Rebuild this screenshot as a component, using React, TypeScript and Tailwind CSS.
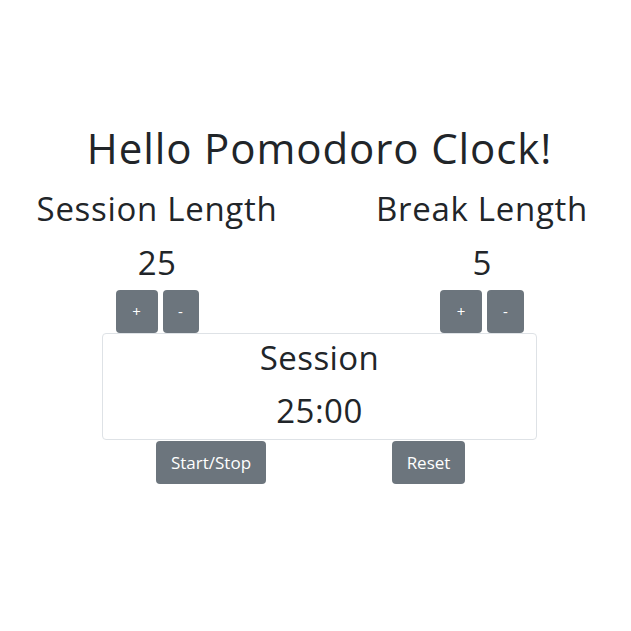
export default function App() {
  return (
    <div className="w-[631px] h-[631px] bg-white text-[#212529] font-['Open_Sans',sans-serif]">
      <div className="pt-[124px] pl-[8px]">
        <h1 className="text-center text-[42px] leading-[48px] tracking-[0.9px]">Hello Pomodoro Clock!</h1>
      </div>

      <div className="flex mt-[17px]">
        <div className="w-[314px] flex flex-col items-center">
          <h2 className="text-[33px] leading-[40px] tracking-[0.7px]">Session Length</h2>
          <div className="mt-[14px] text-[33px] leading-[40px] tracking-[0.5px]">25</div>
          <div className="mt-[7px] flex gap-[5px]">
            <button className="w-[42px] h-[43px] rounded-[4px] bg-[#6c757d] text-white text-[15px]">+</button>
            <button className="w-[36px] h-[43px] rounded-[4px] bg-[#6c757d] text-white text-[15px]">-</button>
          </div>
        </div>
        <div className="w-[298px] ml-[19px] flex flex-col items-center">
          <h2 className="text-[33px] leading-[40px] tracking-[0.7px]">Break Length</h2>
          <div className="mt-[14px] text-[33px] leading-[40px]">5</div>
          <div className="mt-[7px] flex gap-[5px]">
            <button className="w-[42px] h-[43px] rounded-[4px] bg-[#6c757d] text-white text-[15px]">+</button>
            <button className="w-[37px] h-[43px] rounded-[4px] bg-[#6c757d] text-white text-[15px]">-</button>
          </div>
        </div>
      </div>

      <div className="ml-[102px] w-[435px] h-[107px] border border-[#dee2e6] rounded-[4px] flex flex-col items-center">
        <div className="mt-[4px] text-[33px] leading-[40px] tracking-[0.4px]">Session</div>
        <div className="mt-[13px] text-[33px] leading-[40px] tracking-[0.5px]">25:00</div>
      </div>

      <div className="flex ml-[156px] mt-[1px]">
        <button className="h-[43px] w-[110px] rounded-[4px] bg-[#6c757d] text-white text-[17px]">Start/Stop</button>
        <button className="ml-[126px] h-[43px] w-[73px] rounded-[4px] bg-[#6c757d] text-white text-[17px]">Reset</button>
      </div>
    </div>
  );
}
